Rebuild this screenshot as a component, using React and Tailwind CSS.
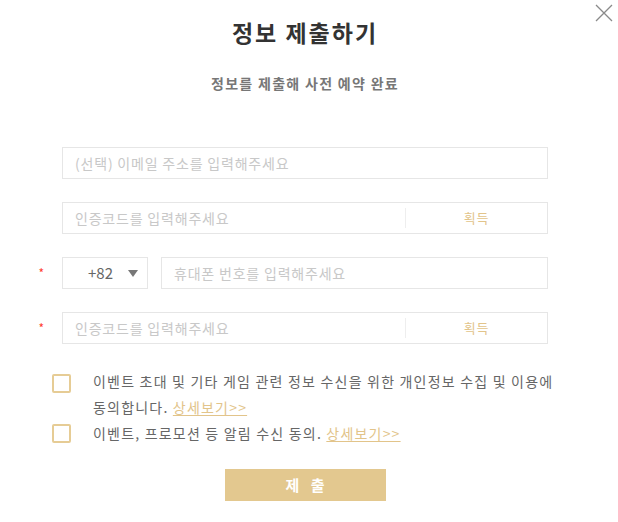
export default function App() {
  const font = { fontFamily: '"Noto Sans CJK KR", "Noto Sans", sans-serif' };

  return (
    <div className="relative w-[618px] h-[522px] bg-white overflow-hidden" style={font}>
      {/* close */}
      <button className="absolute top-[4px] right-[5px] w-[18px] h-[18px]" aria-label="close">
        <svg viewBox="0 0 18 18" className="w-[18px] h-[18px]" fill="none" stroke="#8a8a8a" strokeWidth="1.3">
          <path d="M1 1 L17 17 M17 1 L1 17" />
        </svg>
      </button>

      <div className="pr-[8px]">
        <h1 className="pt-[16px] text-center text-[23px] leading-[32px] font-bold text-[#333] tracking-[2px]">
          정보 제출하기
        </h1>
        <p className="mt-[25px] text-center text-[14px] leading-[20px] font-bold text-[#777] tracking-[1.3px]">
          정보를 제출해 사전 예약 완료
        </p>
      </div>

      <div className="mt-[54px] flex flex-col gap-[23px] pr-[70px] tracking-[0.8px]">
        {/* email */}
        <div className="flex">
          <div className="w-[62px] shrink-0" />
          <div className="flex-1 h-[32px] border border-[#e6e6e6] flex items-center px-[12px] text-[14px] text-[#c8c8c8]">
            (선택) 이메일 주소를 입력해주세요
          </div>
        </div>

        {/* code */}
        <div className="flex">
          <div className="w-[62px] shrink-0" />
          <div className="flex-1 h-[32px] border border-[#e6e6e6] flex items-center text-[14px]">
            <span className="flex-1 pl-[12px] text-[#c8c8c8]">인증코드를 입력해주세요</span>
            <span className="h-[20px] border-l border-[#eeeeee]" />
            <span className="w-[141px] text-center text-[13px] text-[#e2c48a]">획득</span>
          </div>
        </div>

        {/* phone */}
        <div className="flex">
          <div className="w-[62px] shrink-0 flex items-center justify-end pr-[17px] text-[12px] text-[#ff3b30]">*</div>
          <div className="w-[86px] h-[32px] border border-[#e6e6e6] flex items-center pl-[25px] text-[15px] text-[#666] tracking-normal">
            <span>+82</span>
            <svg viewBox="0 0 10 7" className="ml-[15px] w-[10px] h-[7px]" fill="#777">
              <path d="M0 0 H10 L5 7 Z" />
            </svg>
          </div>
          <div className="ml-[13px] flex-1 h-[32px] border border-[#e6e6e6] flex items-center px-[12px] text-[14px] text-[#c8c8c8]">
            휴대폰 번호를 입력해주세요
          </div>
        </div>

        {/* code 2 */}
        <div className="flex">
          <div className="w-[62px] shrink-0 flex items-center justify-end pr-[17px] text-[12px] text-[#ff3b30]">*</div>
          <div className="flex-1 h-[32px] border border-[#e6e6e6] flex items-center text-[14px]">
            <span className="flex-1 pl-[12px] text-[#c8c8c8]">인증코드를 입력해주세요</span>
            <span className="h-[20px] border-l border-[#eeeeee]" />
            <span className="w-[141px] text-center text-[13px] text-[#e2c48a]">획득</span>
          </div>
        </div>
      </div>

      {/* agreements */}
      <div className="mt-[24px] pl-[52px] pr-[50px] flex flex-col text-[14px] leading-[26px] text-[#666] tracking-[1.2px]">
        <label className="flex items-start">
          <span className="mt-[6px] w-[19px] h-[19px] shrink-0 border-2 border-[#e6cc95] rounded-[2px]" />
          <span className="ml-[22px]">
            이벤트 초대 및 기타 게임 관련 정보 수신을 위한 개인정보 수집 및 이용에 동의합니다.{' '}
            <a className="text-[#e2c48a] underline underline-offset-2">상세보기&gt;&gt;</a>
          </span>
        </label>
        <label className="flex items-start">
          <span className="mt-[4px] w-[19px] h-[19px] shrink-0 border-2 border-[#e6cc95] rounded-[2px]" />
          <span className="ml-[22px]">
            이벤트, 프로모션 등 알림 수신 동의.{' '}
            <a className="text-[#e2c48a] underline underline-offset-2">상세보기&gt;&gt;</a>
          </span>
        </label>
      </div>

      <div className="mt-[23px] flex justify-center pr-[8px]">
        <button className="w-[161px] h-[32px] bg-[#e3c88f] text-white text-[15px] font-bold tracking-[4px] pl-[4px]">
          제 출
        </button>
      </div>
    </div>
  );
}
